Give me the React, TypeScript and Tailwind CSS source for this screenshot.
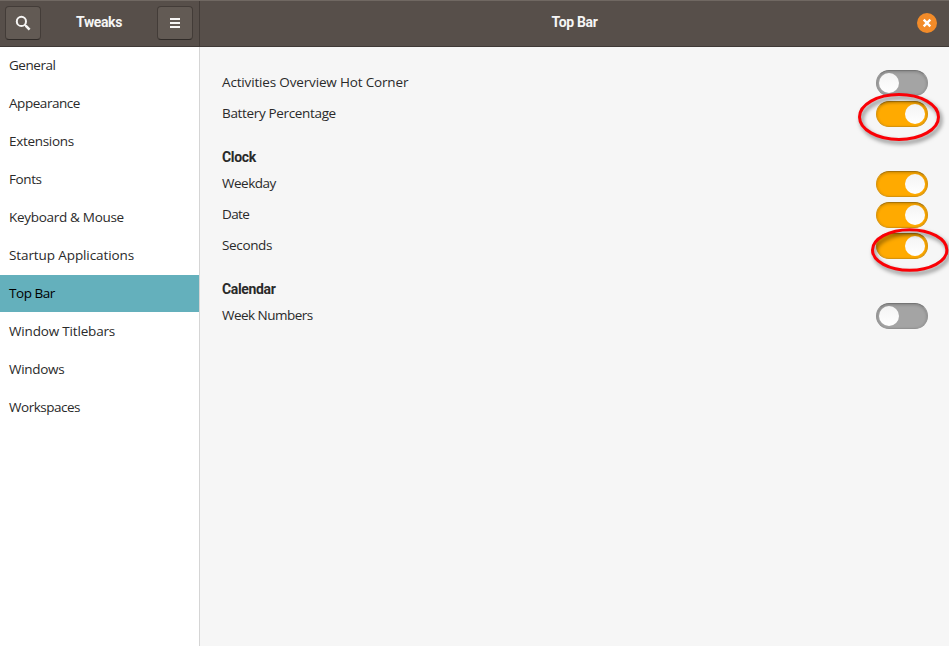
const sidebarItems: { label: string; tracking: string }[] = [
  { label: "General", tracking: "tracking-[-0.45px]" },
  { label: "Appearance", tracking: "tracking-[-0.45px]" },
  { label: "Extensions", tracking: "tracking-[-0.3px]" },
  { label: "Fonts", tracking: "tracking-[-0.4px]" },
  { label: "Keyboard & Mouse", tracking: "tracking-[-0.3px]" },
  { label: "Startup Applications", tracking: "tracking-[-0.1px]" },
  { label: "Top Bar", tracking: "tracking-[-0.45px]" },
  { label: "Window Titlebars", tracking: "tracking-[-0.17px]" },
  { label: "Windows", tracking: "tracking-[-0.3px]" },
  { label: "Workspaces", tracking: "tracking-[-0.48px]" },
];

function Toggle({ on }: { on: boolean }) {
  return (
    <button
      role="switch"
      aria-checked={on}
      className={
        "flex h-[26px] w-[52px] shrink-0 items-center rounded-full border px-[2px] shadow-[inset_0_1px_3px_rgba(0,0,0,0.2)] " +
        (on
          ? "justify-end border-[#d7930c] border-t-[#a87308] bg-[#ffaa00]"
          : "justify-start border-[#929292] border-t-[#757575] bg-[#a4a4a4]")
      }
    >
      <span className="size-5 rounded-full bg-linear-to-b from-[#f4f4f4] to-white" />
    </button>
  );
}

function Setting({ label, on = false, tracking }: { label: string; on?: boolean; tracking: string }) {
  return (
    <div className="flex h-[26px] items-center justify-between">
      <span className={"pb-[2px] whitespace-nowrap " + tracking}>{label}</span>
      <Toggle on={on} />
    </div>
  );
}

function Heading({ children }: { children: string }) {
  return <h2 className="mt-[15px] h-[29px] font-['Roboto',sans-serif] text-[14px] leading-[31px] font-bold tracking-[-0.35px]">{children}</h2>;
}

const headerButton =
  "mb-px flex h-[34px] w-9 items-center justify-center rounded-[4px] border border-[#433c38] border-b-[#302b28] bg-[#625a54]";

export default function App() {
  return (
    <div className="relative flex h-[646px] w-[949px] flex-col overflow-hidden bg-[#f6f6f6] font-['Open_Sans','Noto_Sans',sans-serif] text-[13.5px] text-[#2a2a2a]">
      <header className="flex h-[47px] shrink-0 border-t border-b border-t-[#706862] border-b-[#3f3936] bg-[#574f4a] font-['Roboto',sans-serif] text-[14px] font-bold text-[#f5f5f5]">
        <div className="flex w-[200px] items-center justify-between border-r border-[#423b37] pr-[6px] pl-[5px]">
          <button aria-label="Search" className={headerButton}>
            <svg width="16" height="16" viewBox="0 0 16 16" fill="none" stroke="#f7f6f5">
              <circle cx="6.4" cy="6.4" r="4.6" strokeWidth="2" />
              <path d="M9.7 9.7 L11 11" strokeWidth="1.6" />
              <path d="M10.7 10.7 L14.6 14.6" strokeWidth="2.6" />
            </svg>
          </button>
          <span className="pb-[3px] tracking-[-0.4px]">Tweaks</span>
          <button aria-label="Menu" className={headerButton}>
            <svg width="16" height="16" viewBox="0 0 16 16" fill="#f7f6f5">
              <path d="M3 3h10v2H3zM3 7h10v2H3zM3 11h10v2H3z" />
            </svg>
          </button>
        </div>
        <div className="flex flex-1 items-center">
          <span className="flex-1 pb-[3px] pl-[32px] text-center tracking-[-0.35px]">Top Bar</span>
          <button aria-label="Close" className="mr-3 mb-px flex size-5 items-center justify-center rounded-full bg-[#f28b29]">
            <svg width="10" height="10" viewBox="0 0 10 10" stroke="#fff" strokeWidth="2.4">
              <path d="M1.7 1.7 8.3 8.3M8.3 1.7 1.7 8.3" />
            </svg>
          </button>
        </div>
      </header>
      <div className="flex min-h-0 flex-1">
        <nav className="flex w-[200px] shrink-0 flex-col gap-px border-r border-[#d5d5d5] bg-white">
          {sidebarItems.map(({ label, tracking }) => (
            <div
              key={label}
              className={
                "flex h-[37px] items-center pb-px pl-[9px] whitespace-nowrap " +
                tracking +
                (label === "Top Bar" ? " bg-[#64b0bc] text-black" : "")
              }
            >
              {label}
            </div>
          ))}
        </nav>
        <main className="flex-1 pt-[23px] pr-[21px] pl-[22px]">
          <section className="flex flex-col gap-[5px]">
            <Setting label="Activities Overview Hot Corner" tracking="tracking-[-0.16px]" />
            <Setting label="Battery Percentage" on tracking="tracking-[-0.34px]" />
          </section>
          <Heading>Clock</Heading>
          <section className="flex flex-col gap-[5px]">
            <Setting label="Weekday" on tracking="tracking-[-0.5px]" />
            <Setting label="Date" on tracking="tracking-[-0.6px]" />
            <Setting label="Seconds" on tracking="tracking-[-0.35px]" />
          </section>
          <Heading>Calendar</Heading>
          <Setting label="Week Numbers" tracking="tracking-[-0.53px]" />
        </main>
      </div>
      <svg className="pointer-events-none absolute inset-0 drop-shadow-[2px_3px_2px_rgba(0,0,0,0.5)]" width="949" height="646" fill="none" stroke="#fa0006" strokeWidth="3">
        <ellipse cx="899" cy="117" rx="39.5" ry="22.5" />
        <ellipse cx="909.7" cy="250" rx="37.2" ry="20.3" />
      </svg>
    </div>
  );
}
